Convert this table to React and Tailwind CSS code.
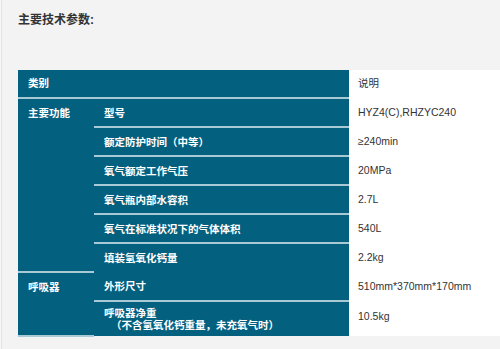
const rows = [
  { group: "主要功能", span: 6, name: "型号", value: "HYZ4(C),RHZYC240" },
  { name: "额定防护时间（中等）", value: "≥240min" },
  { name: "氧气额定工作气压", value: "20MPa" },
  { name: "氧气瓶内部水容积", value: "2.7L" },
  { name: "氧气在标准状况下的气体体积", value: "540L" },
  { name: "填装氢氧化钙量", value: "2.2kg", last: true },
  { group: "呼吸器", span: 2, name: "外形尺寸", value: "510mm*370mm*170mm" },
  {
    name: "呼吸器净重",
    note: "（不含氢氧化钙重量，未充氧气时）",
    value: "10.5kg",
    last: true,
    tall: true,
  },
];

function App() {
  return (
    <div
      className="h-[349px] w-[500px] overflow-hidden bg-[#f8f8f8] pl-[1px]"
      style={{ fontFamily: '"Liberation Sans", Arial, "Noto Sans CJK SC", sans-serif' }}
    >
      <div className="h-[349px] border-l border-[#e4e4e4] bg-[#f3f3f3] pt-[12px]">
        <h2 className="pl-[16px] text-[12px] font-bold leading-[16px] text-[#333]">
          主要技术参数:
        </h2>

        <div className="mt-[42px] pl-[16px]">
          <table className="w-[520px] border-collapse text-[10.5px]">
            <colgroup>
              <col className="w-[76px]" />
              <col className="w-[255px]" />
              <col />
            </colgroup>
            <tbody>
              <tr className="h-[28px]">
                <td
                  colSpan={2}
                  className="border-b-2 border-[#a9cad5] bg-[#04607f] pl-[10px] font-bold text-white"
                >
                  类别
                </td>
                <td className="bg-white pl-[9px] align-middle text-[#333]">说明</td>
              </tr>
              {rows.map((r, i) => (
                <tr key={i} className={r.tall ? "h-[35px]" : "h-[29px]"}>
                  {r.group && (
                    <td
                      rowSpan={r.span}
                      className="border-b-2 border-[#a9cad5] bg-[#04607f] pl-[10px] pt-[8px] align-top font-bold leading-[12px] text-white"
                    >
                      {r.group}
                    </td>
                  )}
                  <td
                    className={`bg-[#04607f] pl-[10px] align-middle font-bold leading-[12px] text-white ${
                      r.last ? "" : "border-b-2 border-[#a9cad5]"
                    }`}
                  >
                    {r.name}
                    {r.note && <div className="pl-[7px]">{r.note}</div>}
                  </td>
                  <td
                    className={`bg-white pl-[9px] text-[#333] ${
                      r.tall ? "pt-[8px] align-top" : "align-middle"
                    }`}
                  >
                    {r.value}
                  </td>
                </tr>
              ))}
            </tbody>
          </table>
        </div>
      </div>
    </div>
  );
}

export default App;
